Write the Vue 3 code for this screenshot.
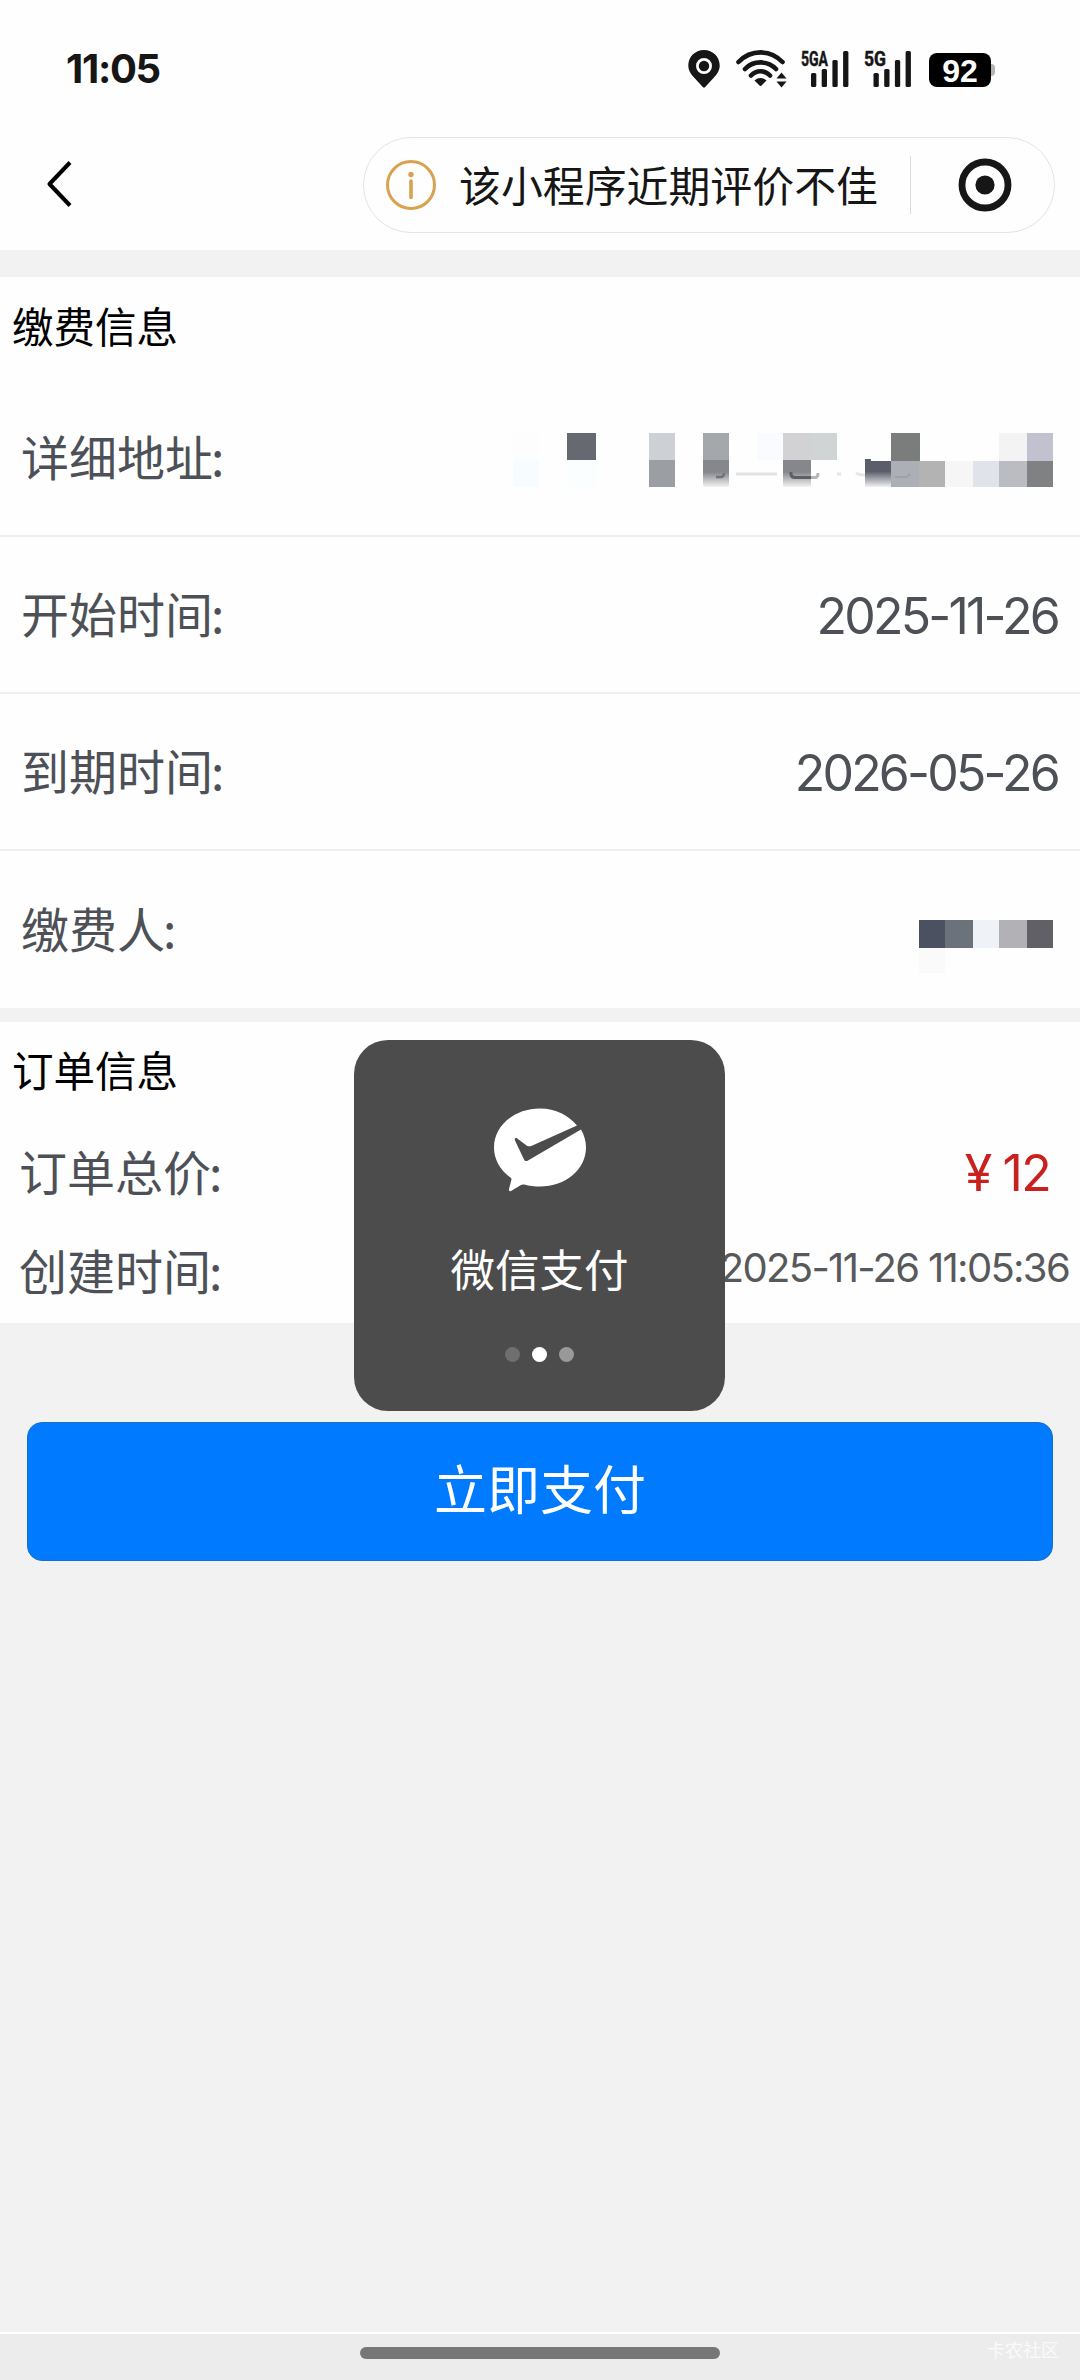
<script setup>
const payRows = [
  { label: '详细地址', kind: 'address' },
  { label: '开始时间', kind: 'date', value: '2025-11-26' },
  { label: '到期时间', kind: 'date', value: '2026-05-26' },
  { label: '缴费人', kind: 'payer' },
]

// Redaction blocks: x, y, width, height, fill
const addressBlocks = [
  [0, 0, 26, 27, '#fdfdfd'],
  [0, 27, 26, 27, '#f6fcff'],
  [54, 0, 29, 27, '#66696f'],
  [54, 27, 29, 27, '#fafeff'],
  [136, 0, 26, 27, '#cdd0d4'],
  [136, 27, 26, 27, '#9b9fa3'],
  [190, 0, 26, 27, '#a5a8ab'],
  [244, 0, 26, 27, '#f9fbfe'],
  [270, 0, 28, 27, '#d2d2d4'],
  [298, 0, 26, 27, '#d0d4d5'],
  [378, 0, 29, 29, '#7b7d7c'],
  [486, 0, 28, 28, '#f3f3f4'],
  [514, 0, 26, 28, '#c2c1cf'],
  [378, 28, 28, 26, '#acafb5'],
  [406, 28, 26, 26, '#b3b3b3'],
  [432, 28, 28, 26, '#f6f6f7'],
  [460, 28, 26, 26, '#e0e3ea'],
  [486, 28, 28, 26, '#bbbbc2'],
  [514, 28, 26, 26, '#808183'],
]
const payerBlocks = [
  [0, 0, 26, 28, '#4b5160'],
  [26, 0, 28, 28, '#6c727b'],
  [54, 0, 26, 28, '#eff3f8'],
  [80, 0, 28, 28, '#b1b1b6'],
  [108, 0, 26, 28, '#606066'],
  [0, 28, 26, 25, '#fafafa'],
]
const signalBars = [
  [0, 22, 14],
  [10.7, 18, 18],
  [21.4, 9, 27],
  [32.1, 0, 36],
]
</script>

<template>
  <div class="screen">
    <header class="top">
      <div class="status">
        <span class="clock">11:05</span>
        <div class="status-icons">
          <svg class="pin" width="32" height="38" viewBox="0 0 32 38">
            <path d="M16 0C7 0 .3 6.900.3 15.600c0 5 2.700 8.900 6.200 12.400l8.300 8.900c.7.800 1.700.8 2.400 0l8.300-8.900c3.500-3.500 6.200-7.400 6.200-12.400C31.700 6.900 25 0 16 0z" fill="#161616" />
            <circle cx="16" cy="16" r="6.600" fill="none" stroke="#fff" stroke-width="2.800" />
          </svg>
          <svg class="wifi" width="51" height="38" viewBox="0 0 51 38">
            <g fill="none" stroke="#161616" stroke-width="4.600" stroke-linecap="round">
              <path d="M2.500 12C15-.8 34-.8 46.500 12" />
              <path d="M9 19C17.500 10.200 31.500 10.200 40 19" />
              <path d="M15 25.500C20.500 19.800 28.500 19.800 34 25.500" />
            </g>
            <path d="M18.500 30.500c3.500-3.300 8.500-3.300 12 0L25.500 35.500q-1 1-2 0z" fill="#161616" />
            <path d="M40.500 28.500L45.500 22.500L50.500 28.500zM40.500 31.500L45.500 37.500L50.500 31.500z" fill="#161616" />
          </svg>
          <svg class="signal" width="48" height="48" viewBox="0 -10 48 48">
            <text x="0" y="15.800" textLength="27" lengthAdjust="spacingAndGlyphs" class="net">5GA</text>
            <rect v-for="b in signalBars" :key="b[0]" :x="b[0] + 10" :y="b[1] + 1" width="5.300" :height="b[2]" rx="1.500" fill="#161616" />
          </svg>
          <svg class="signal2" width="48" height="48" viewBox="0 -10 48 48">
            <text x="0" y="15.800" textLength="22" lengthAdjust="spacingAndGlyphs" class="net">5G</text>
            <rect v-for="b in signalBars" :key="b[0]" :x="b[0] + 9.500" :y="b[1] + 1" width="5.300" :height="b[2]" rx="1.500" fill="#161616" />
          </svg>
          <div class="battery"><span>92</span></div>
          <i class="nub"></i>
        </div>
      </div>

      <div class="nav">
        <svg class="back" width="28" height="50" viewBox="0 0 28 50">
          <path d="M24 3.500L3.500 25L24 46.500" fill="none" stroke="#000" stroke-width="4" stroke-linejoin="round" />
        </svg>
        <div class="capsule">
          <svg class="info" width="50" height="50" viewBox="0 0 50 50">
            <circle cx="25" cy="25" r="23.500" fill="none" stroke="#d9a252" stroke-width="3" />
            <circle cx="25" cy="14.500" r="2.700" fill="#d9a252" />
            <path d="M25 21V37.500" stroke="#d9a252" stroke-width="3.600" stroke-linecap="round" />
          </svg>
          <span class="notice">该小程序近期评价不佳</span>
          <i class="divider"></i>
          <svg class="target" width="54" height="54" viewBox="0 0 54 54">
            <circle cx="27" cy="27" r="23" fill="none" stroke="#161616" stroke-width="6.800" />
            <circle cx="27" cy="27" r="9.600" fill="#161616" />
          </svg>
        </div>
      </div>
    </header>

    <section class="card pay">
      <h2>缴费信息</h2>
      <div v-for="row in payRows" :key="row.label" class="row">
        <span class="label">{{ row.label }}<span class="colon">:</span></span>
        <span v-if="row.kind === 'date'" class="date">{{ row.value }}</span>
        <svg v-else-if="row.kind === 'address'" class="mosaic" width="540" height="54" viewBox="0 0 540 54">
          <defs>
            <linearGradient id="fadeGrey" x1="0" y1="0" x2="0" y2="1">
              <stop offset="0.450" stop-color="#85878c" />
              <stop offset="1" stop-color="#f4f4f5" />
            </linearGradient>
            <linearGradient id="fadeNavy" x1="0" y1="0" x2="0" y2="1">
              <stop offset="0.400" stop-color="#5b5d6b" />
              <stop offset="1" stop-color="#f1f1f4" />
            </linearGradient>
          </defs>
          <rect v-for="(b, i) in addressBlocks" :key="i" :x="b[0]" :y="b[1]" :width="b[2]" :height="b[3]" :fill="b[4]" />
          <rect x="190" y="27" width="26" height="27" fill="url(#fadeGrey)" />
          <rect x="270" y="27" width="28" height="27" fill="url(#fadeGrey)" />
          <rect x="352" y="28" width="26" height="26" fill="url(#fadeNavy)" />
          <rect x="352" y="26" width="6" height="3" fill="#5b5d6b" />
          <path d="M223 41H264" stroke="#e2e2e2" stroke-width="3" />
          <path d="M203 44H208Q211 44 211 40" fill="none" stroke="#717378" stroke-width="2.500" />
          <path d="M278 39V41Q278 44.500 282 44.500H298" fill="none" stroke="#5d5f64" stroke-width="3" />
          <path d="M298 44.500H302Q305 44.500 305 40" fill="none" stroke="#b5b6b9" stroke-width="3" />
          <path d="M324 41H328M343 40Q346 42 352 42" fill="none" stroke="#e6e6e6" stroke-width="3" />
          <path d="M382 44H392Q395 44 397 41" fill="none" stroke="#9fa2a8" stroke-width="2" />
        </svg>
        <svg v-else class="mosaic payer" width="134" height="53" viewBox="0 0 134 53">
          <rect v-for="(b, i) in payerBlocks" :key="i" :x="b[0]" :y="b[1]" :width="b[2]" :height="b[3]" :fill="b[4]" />
        </svg>
      </div>
    </section>

    <section class="card order">
      <h2>订单信息</h2>
      <div class="line total">
        <span class="label">订单总价<span class="colon">:</span></span>
        <span class="price"><span class="yen">¥</span>12</span>
      </div>
      <div class="line created">
        <span class="label">创建时间<span class="colon">:</span></span>
        <span class="time">2025-11-26 11:05:36</span>
      </div>
    </section>

    <button class="pay-btn">立即支付</button>

    <footer class="bottom">
      <i class="home"></i>
      <span class="mark">卡农社区</span>
    </footer>

    <div class="toast">
      <svg class="logo" width="92" height="84" viewBox="0 0 92 84">
        <path d="M46 .5C20.500.5 0 17.500 0 39.500c0 12.500 6.500 23 16.800 30.300c.6.500.8 1.200.6 2L15 81c-.5 1.800 1 2.700 2.400 1.800L27 77c1-.6 2-.8 3.200-.4c5 1.400 10.300 2 15.800 2c25.500 0 46-17 46-39c0-6.600-1.800-12.700-5-18.200L34 52.500c-1.600 1-3.200.6-4-1L21 32.500c-.7-2 .7-3.200 2.300-2l9.300 6.900c1.500 1 3 1.200 4.700.5L83 17.500C75 7.500 61.500.5 46 .5z" fill="#fff" />
      </svg>
      <span class="toast-text">微信支付</span>
      <div class="dots"><i></i><i></i><i></i></div>
    </div>
  </div>
</template>

<style>
html,
body {
  margin: 0;
  background: #f2f2f2;
}
</style>

<style scoped>
.screen {
  position: relative;
  display: flex;
  flex-direction: column;
  width: 1080px;
  height: 2380px;
  overflow: hidden;
  background: #f2f2f2;
  font-family: 'Noto Sans CJK SC', sans-serif;
}
.screen * {
  box-sizing: border-box;
}
.top {
  height: 250px;
  background: #fefefe;
}
.status {
  display: flex;
  justify-content: space-between;
  height: 137px;
  padding: 50px 85px 0 66px;
}
.clock {
  font: 700 40px/38px Inter, sans-serif;
  letter-spacing: -1.300px;
  color: #161616;
}
.status-icons {
  display: flex;
  align-items: flex-start;
}
.wifi {
  margin-left: 16px;
}
.signal {
  margin: -10px 0 0 14px;
}
.signal2 {
  margin: -10px 0 0 15px;
}
.net {
  font: 700 21px Roboto, sans-serif;
  fill: #161616;
  stroke: #161616;
  stroke-width: 0.5px;
}
.battery {
  display: flex;
  align-items: center;
  justify-content: center;
  width: 62px;
  height: 34px;
  margin: 3px 0 0 17px;
  border-radius: 8px;
  background: #000;
  color: #fff;
  font: 700 32px/34px 'Liberation Sans', sans-serif;
  padding-top: 1px;
}
.nub {
  width: 4px;
  height: 12px;
  margin-top: 14px;
  border-radius: 0 5px 5px 0;
  background: #b5b5b5;
}
.nav {
  display: flex;
  justify-content: space-between;
  align-items: flex-start;
  padding: 0 25px 0 46px;
}
.back {
  margin-top: 22px;
}
.capsule {
  display: flex;
  align-items: center;
  width: 692px;
  height: 96px;
  padding-left: 22px;
  border: 1px solid #e4e4e4;
  border-radius: 48px;
}
.notice {
  margin: -2px 0 0 23px;
  font-size: 41.900px;
  line-height: 60px;
  color: #161616;
  white-space: nowrap;
}
.divider {
  width: 1px;
  height: 58px;
  margin: 0 47px 0 32px;
  background: #dcdcdc;
}
.card {
  background: #fefefe;
}
.pay {
  height: 731px;
  margin-top: 27px;
}
h2 {
  margin: 0;
  padding-left: 12px;
  font-size: 41.500px;
  font-weight: 400;
  line-height: 60px;
  color: #000;
}
.pay h2 {
  height: 103px;
  padding-top: 18px;
}
.row {
  display: flex;
  justify-content: space-between;
  align-items: center;
  height: 157px;
  padding: 0 22px 0 21px;
  border-bottom: 2px solid #efefef;
}
.row:last-child {
  border-bottom: 0;
}
.label {
  padding-bottom: 5px;
  font-size: 48px;
  line-height: 70px;
  color: #4d5157;
}
.colon {
  margin-left: -2px;
}
.date {
  padding-top: 2px;
  font: 400 50px/60px Inter, sans-serif;
  letter-spacing: -2.800px;
  color: #4d5157;
}
.mosaic {
  margin-right: 5px;
  margin-top: 4px;
}
.payer {
  margin-top: 34px;
}
.order {
  height: 301px;
  margin-top: 14px;
}
.order h2 {
  height: 101px;
  padding-top: 17px;
}
.line {
  display: flex;
  justify-content: space-between;
  align-items: center;
  height: 99px;
  padding-left: 19px;
}
.total {
  padding-right: 30px;
}
.created {
  padding-right: 11px;
}
.price {
  padding-top: 1px;
  font: 400 50px/60px Inter, sans-serif;
  letter-spacing: -1.700px;
  color: #c9211e;
}
.yen {
  margin-right: 12px;
}
.time {
  margin-top: -8px;
  font: 400 40px/50px Inter, sans-serif;
  letter-spacing: -1.700px;
  color: #58595b;
  white-space: nowrap;
}
.pay-btn {
  width: 1026px;
  height: 139px;
  margin: 99px 0 0 27px;
  padding: 0 0 9px;
  border: 1px solid #1a6fc9;
  border-radius: 15px;
  background: #007aff;
  color: #fff;
  font-family: inherit;
  font-size: 53px;
  line-height: 80px;
}
.bottom {
  display: grid;
  grid-template-columns: 1fr 360px 1fr;
  height: 48px;
  margin-top: auto;
  border-top: 2px solid #fff;
  background: #ececec;
}
.home {
  grid-column: 2;
  height: 12px;
  margin-top: 13px;
  border-radius: 6px;
  background: #777;
}
.mark {
  justify-self: end;
  margin: 2px 21px 0 0;
  font-size: 18px;
  line-height: 26px;
  color: #fafafa;
}
.toast {
  position: absolute;
  left: 354px;
  top: 1040px;
  display: flex;
  flex-direction: column;
  align-items: center;
  width: 371px;
  height: 371px;
  padding-top: 68px;
  border-radius: 34px;
  background: #4c4c4c;
}
.toast-text {
  margin-top: 44px;
  font-size: 44.500px;
  line-height: 64px;
  color: #fff;
}
.dots {
  display: flex;
  gap: 12px;
  margin-top: 47px;
}
.dots i {
  width: 15px;
  height: 15px;
  border-radius: 50%;
  background: #6f6f6f;
}
.dots i:nth-child(2) {
  background: #fff;
}
.dots i:nth-child(3) {
  background: #999;
}
</style>
